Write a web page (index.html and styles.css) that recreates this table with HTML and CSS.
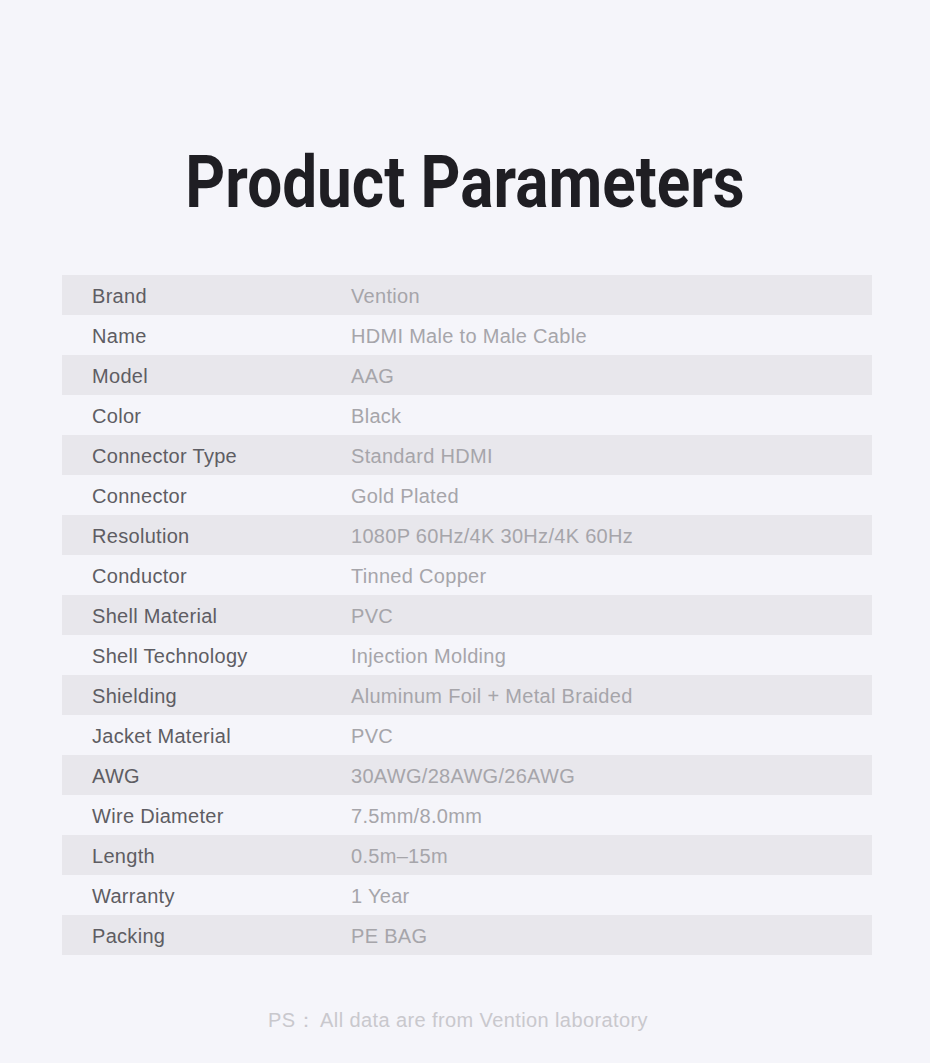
FILE: index.html
```html
<!DOCTYPE html>
<html>
<head>
<meta charset="utf-8">
<link rel="stylesheet" href="styles.css">
</head>
<body>
<div class="page">
  <h1 class="title"><span class="title-text">Product Parameters</span></h1>
  <div class="table">
    <div class="row"><div class="label">Brand</div><div class="value">Vention</div></div>
    <div class="row"><div class="label">Name</div><div class="value">HDMI Male to Male Cable</div></div>
    <div class="row"><div class="label">Model</div><div class="value">AAG</div></div>
    <div class="row"><div class="label">Color</div><div class="value">Black</div></div>
    <div class="row"><div class="label">Connector Type</div><div class="value">Standard HDMI</div></div>
    <div class="row"><div class="label">Connector</div><div class="value">Gold Plated</div></div>
    <div class="row"><div class="label">Resolution</div><div class="value">1080P 60Hz/4K 30Hz/4K 60Hz</div></div>
    <div class="row"><div class="label">Conductor</div><div class="value">Tinned Copper</div></div>
    <div class="row"><div class="label">Shell Material</div><div class="value">PVC</div></div>
    <div class="row"><div class="label">Shell Technology</div><div class="value">Injection Molding</div></div>
    <div class="row"><div class="label">Shielding</div><div class="value">Aluminum Foil + Metal Braided</div></div>
    <div class="row"><div class="label">Jacket Material</div><div class="value">PVC</div></div>
    <div class="row"><div class="label">AWG</div><div class="value">30AWG/28AWG/26AWG</div></div>
    <div class="row"><div class="label">Wire Diameter</div><div class="value">7.5mm/8.0mm</div></div>
    <div class="row"><div class="label">Length</div><div class="value">0.5m–15m</div></div>
    <div class="row"><div class="label">Warranty</div><div class="value">1 Year</div></div>
    <div class="row"><div class="label">Packing</div><div class="value">PE BAG</div></div>
  </div>
  <p class="note"><span class="ps">PS：</span>All data are from Vention laboratory</p>
</div>
</body>
</html>
```

FILE: styles.css
```css
html, body {
  margin: 0;
  padding: 0;
  background: #f5f5fa;
}
body {
  font-family: "Liberation Sans", Arial, sans-serif;
}
.page {
  width: 930px;
  height: 1063px;
  display: flex;
  flex-direction: column;
  align-items: center;
  overflow: hidden;
}
.title {
  margin: 0;
  padding-top: 132px;
  height: 143px;
  box-sizing: content-box;
  font-family: Roboto, "Liberation Sans", sans-serif;
  font-weight: 700;
  font-size: 73px;
  line-height: 100px;
  color: #1f1e23;
  text-align: center;
  width: 930px;
}
.title-text {
  display: inline-block;
  transform: scaleX(0.85);
}
.table {
  width: 810px;
  margin-left: 4px;
  display: flex;
  flex-direction: column;
}
.row {
  height: 40px;
  box-sizing: border-box;
  padding-top: 3px;
  display: flex;
  align-items: center;
  font-size: 20px;
  letter-spacing: 0.3px;
}
.row:nth-child(odd) {
  background: #e8e7ec;
}
.label {
  width: 259px;
  padding-left: 30px;
  color: #5e5d63;
}
.value {
  color: #a6a5aa;
}
.note {
  margin: 52px 14px 0 0;
  font-size: 20px;
  color: #c9c8cd;
  letter-spacing: 0.4px;
}
.ps {
  display: inline-block;
  width: 52px;
}
```
